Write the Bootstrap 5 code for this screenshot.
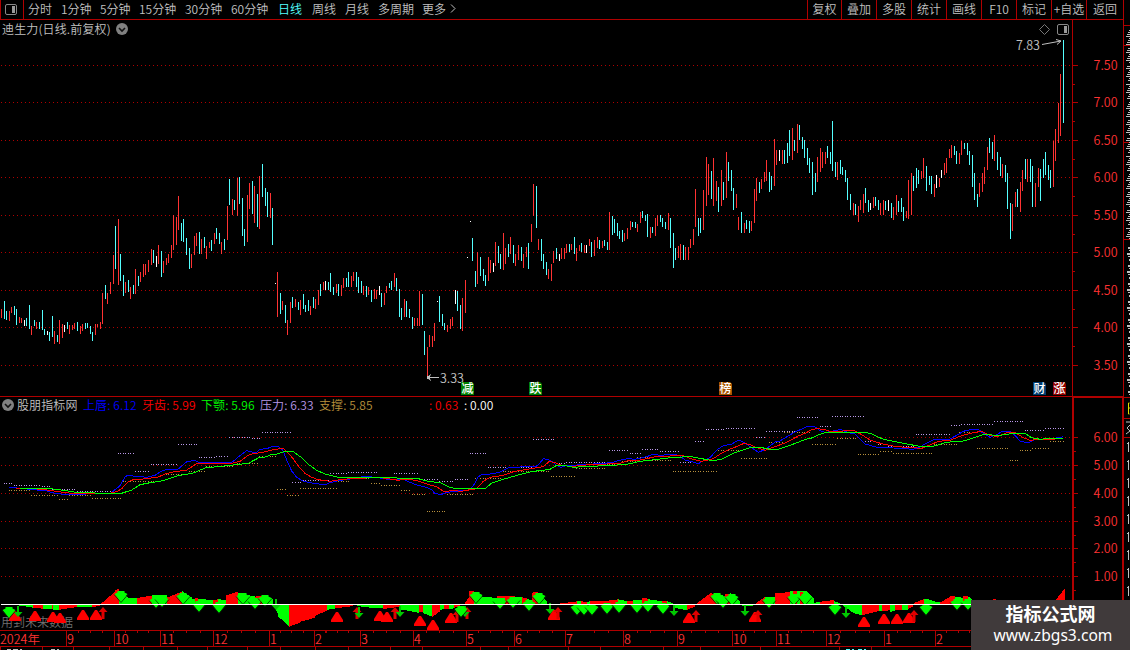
<!DOCTYPE html>
<html lang="zh-CN">
<head>
<meta charset="utf-8">
<title>迪生力 日线</title>
<link href="https://cdn.jsdelivr.net/npm/bootstrap@5.3.0/dist/css/bootstrap.min.css" rel="stylesheet">
<style>
:root{--ln:#b00000;--tx:#c0c0c0;--rd:#ff3232}
html,body{height:650px;overflow:hidden}
body{background:#000;color:var(--tx);font:12px/16px "Noto Sans CJK SC","Liberation Sans",sans-serif;font-weight:350}
.app{width:1130px;height:650px}
.desk{width:1124px;border-right:1px solid var(--ln)}
.toolbar{height:20px;border-bottom:1px solid var(--ln);line-height:18px}
.toolbar .ico{width:24px;border-right:1px solid var(--ln);border-left:1px solid var(--ln);height:19px}
.toolbar .tool{width:35px;border-left:1px solid var(--ln);height:19px}
.on{color:#54ffff}
.stack{display:grid}
.stack>*{grid-area:1/1}
.price{height:376px}.indi{height:234px}
.legend span{width:59px;flex:none}
.legend{letter-spacing:.1px}
.heading{padding:1px 0 0 2px;letter-spacing:.15px}
.axis{height:16px;border-top:1px solid var(--ln);border-bottom:1px solid var(--ln);color:var(--rd);height:17px}
.axis div{border-right:1px solid var(--ln);flex:none;line-height:16px;font-size:12.5px}
svg{display:block}
svg text{font-family:"Noto Sans CJK SC","Liberation Sans",sans-serif}
.strip{width:6px;overflow:hidden}
.wm{right:0;bottom:0;width:159px;height:50px;background:#403a3b;color:#fff}
.wm b{font-size:18px;line-height:20px;font-weight:700;margin-top:-3px}
.wm i{font:normal 15.6px/20px "Noto Sans","Open Sans",sans-serif;margin:2px 0 0 5px}
</style>
</head>
<body>
<div class="app d-flex position-relative overflow-hidden">
 <div class="desk d-flex flex-column flex-shrink-0 overflow-hidden">
  <nav class="toolbar d-flex flex-shrink-0">
   <div class="ico d-flex align-items-center justify-content-center flex-shrink-0"><svg width="12" height="11" style="margin-right:2px"><rect x=".5" y=".5" width="11" height="10" rx="1.5" fill="none" stroke="#888"/><rect x="7" y="2" width="3" height="7" fill="#999"/></svg></div>
   <div class="d-flex flex-grow-1" id="periods"></div>
   <div class="d-flex" id="tools"></div>
  </nav>
  <section class="price stack flex-shrink-0">
   <svg id="price" width="1123" height="376" viewBox="0 20 1123 376"></svg>
   <div class="d-flex align-items-start"><div class="heading d-flex align-items-center"><span>迪生力(日线.前复权)</span>
    <svg class="ms-1" width="14" height="14" viewBox="0 0 14 14"><circle cx="7" cy="7" r="6" fill="#808080"/><path d="M4 6l3 3 3-3" fill="none" stroke="#111" stroke-width="1.6"/></svg></div></div>
  </section>
  <section class="indi stack flex-shrink-0">
   <svg id="indi" width="1123" height="234" viewBox="0 396 1123 234"></svg>
   <div class="legend d-flex align-items-start" style="padding-top:1px"><svg width="17" height="16"><circle cx="8" cy="8" r="6" fill="#808080"/><path d="M5 7l3 3 3-3" fill="none" stroke="#111" stroke-width="1.6"/></svg><span style="width:66px">股朋指标网</span><span style="color:#00f">上唇: 6.12</span><span style="color:#f00">牙齿: 5.99</span><span style="color:#0f0">下颚: 5.96</span><span style="color:#b898e8">压力: 6.33</span><span style="color:#b8903c;width:110px">支撑: 5.85</span><span style="color:#f00;width:35px">: 0.63</span><span class="text-white">: 0.00</span></div>
  </section>
  <div class="axis d-flex flex-shrink-0" id="months"></div>
  <svg id="foot" width="1123" height="3" viewBox="0 647 1123 3"></svg>
 </div>
 <svg class="strip flex-shrink-0" id="strip" width="6" height="650" viewBox="1124 0 6 650"></svg>
 <div class="wm position-absolute d-flex flex-column align-items-center justify-content-center"><b>指标公式网</b><i>www.zbgs3.com</i></div>
</div>
<script src="https://cdn.jsdelivr.net/npm/bootstrap@5.3.0/dist/js/bootstrap.bundle.min.js"></script>
<script>
const $=id=>document.getElementById(id);
const R=(x,y,w,h,f)=>`<rect x="${x}" y="${y}" width="${w}" height="${h}" fill="${f}" shape-rendering="crispEdges"/>`;
$('periods').innerHTML=[['分时',33,4],['1分钟',39],['5分钟',39],['15分钟',46],['30分钟',46],['60分钟',47],['日线',34],['周线',33],['月线',33],['多周期',44],['更多',28]].map(([t,w,p],i)=>`<span class="text-nowrap ${i==6?'on':''}" style="width:${w+(p||0)}px;padding-left:${p||0}px">${t}</span>`).join('')+'<svg width="7" height="18"><path d="M1 4.500l4 4-4 4" fill="none" stroke="#c0c0c0"/></svg>';
$('tools').innerHTML=['复权','叠加','多股','统计','画线','F10','标记','+自选','返回'].map((t,i)=>`<div class="tool text-center text-nowrap" style="width:${i==0?34:i==8?37:35}px">${t}</div>`).join('');

// daily ranges: x, high, low, colour; every block is in thirds of a pixel from its own origin
const blocks=[
[0,150,`4,477,504r 13,453,507c 19,483,510c 28,483,513r 34,471,489r 43,468,495c 49,477,525c 58,501,519r 64,504,519r 73,510,528w 79,504,528c 88,465,537c 94,528,555r 103,510,528c 109,516,537r 118,516,537c 127,480,540c 133,537,555c 142,543,555w 148,546,573c 157,498,561c 163,543,582r 172,555,576c 178,510,582r 187,522,564r 193,525,546w 202,516,537c 208,525,552r 217,525,540r 223,519,537r 232,516,543c 241,528,552r 247,522,543r 256,519,537c 262,519,534c 271,528,552c 277,546,573c 286,522,555r 292,522,531r 301,516,537r 307,429,522r 316,405,447c 322,429,462r 331,396,432r 340,315,402r 346,228,357c 355,207,405r 361,312,393c 370,375,438c 376,396,429r 385,390,426c 391,411,447r 400,405,432c 406,357,432r 415,378,408c 421,366,396r 430,342,381r 436,342,375r 445,330,366r 454,297,345r 460,300,339c 469,318,351w 475,285,342r 484,303,381c 490,333,369r 499,324,345r 505,312,339r 514,285,324r 520,195,300r 529,201,285r 535,138,240r 544,219,273c 550,207,276c 559,264,315c 568,294,357c 574,312,354r 583,258,315r 589,249,288r 598,246,312c 604,267,312r 613,261,294c 619,288,327r 628,276,294r 634,270,303c 643,249,282r 649,234,267c 658,249,282c 664,276,312r 673,267,300c 682,168,270r 688,87,165c 697,147,195r 703,150,180c 712,84,198r 718,81,162c 727,144,258c 733,237,288c 742,135,276r 748,99,177r 757,93,192c 763,108,219r 772,132,231c 778,78,237r 787,42,141c 796,114,168c 802,126,201c 811,129,204r 817,174,285c 826,399,402w 832,366,501r 841,429,492c 847,453,480r 856,465,519c 862,510,555r`],
[270,170,`61,396,459r 67,381,414c 76,387,411r 85,396,420c 91,390,435r 100,372,417c 106,405,426c 115,390,423c 121,408,435r 130,381,414c 136,387,417r 145,360,405r 151,342,378c 160,336,360r 166,333,360w 175,336,360c 181,309,366c 190,351,375c 199,342,369r 205,342,378c 214,345,378r 220,324,354r 229,324,351c 235,306,351c 244,318,351r 250,306,333r 259,306,351c 265,321,369c 274,333,369c 280,348,375r 289,348,381c 295,351,375r 304,360,396c 313,357,387r 319,360,387r 328,348,375w 334,369,411c 343,369,405r 349,348,369r 358,339,354c 364,333,360c 373,309,351r 379,324,363c 388,357,441c 394,414,450c 403,387,441r 409,393,441c 418,417,444c 427,441,477c 433,444,468r 442,444,468r 448,363,468r 457,372,465c 463,483,555c 472,531,621r 478,495,531r 487,498,531r 493,459,513r 502,393,396w 508,378,456c 517,432,468c 523,459,480c 532,465,486r 541,447,477r 547,441,468r 556,360,402w 562,363,423c 571,405,477c 577,384,483r 586,330,429r 592,261,264w 601,153,156w 607,204,273c 616,303,351c 622,246,342r 631,261,318c 640,297,333c 646,315,348c 655,261,333r 661,270,309r 670,279,306w 676,216,288r 685,228,279c 691,252,297c 700,189,300r 706,234,282r 715,222,261c 721,201,252r 730,225,279c 736,252,288r 745,225,270r 754,231,273c 760,252,294r 769,231,261r 775,219,297c 784,162,216r 790,42,138r 799,48,174c 805,207,240r 814,207,273c`],
[540,110,`10,432,477c 19,456,495c 25,477,507r 34,462,513r 40,423,459r 49,414,447c 58,432,453w 64,414,447r 73,414,447r 79,402,429r 88,402,426c 94,402,420r 103,381,432c 109,414,453r 118,405,423r 124,399,426c 133,405,429r 139,405,429w 148,387,408r 154,396,441c 163,390,438r 172,381,414r 178,390,417c 187,393,414r 193,390,408c 202,396,420c 208,306,420r 217,318,375c 223,327,369c 232,339,378c 238,363,387c 247,360,396c 253,369,393r 262,354,387r 271,333,360r 277,336,351c 286,336,354c 292,342,366r 301,306,339r 307,303,324c 316,315,333c 322,312,381c 331,351,384r 337,351,369c 346,324,378r 352,315,348r 361,315,336c 367,324,351c 376,336,357c 385,309,360r 391,324,414c 400,369,474c 406,414,450c 415,408,444r 421,402,450r 430,405,450c 436,411,450r 445,411,450r 451,387,414r 460,357,405r 466,237,351r 475,324,378c 481,324,369c 490,240,360r 499,141,288r 505,162,255r 514,183,267c 520,144,288r 529,213,273r 535,231,306c 544,180,288r 550,216,270c 559,126,264r 565,156,213c 574,180,243c 580,234,300c 589,252,294r 595,321,360r 604,306,369c 613,339,369r 619,330,357c 628,333,369c 634,333,363r 643,237,339r 649,204,273r 658,216,249c 664,207,237r 673,186,216r 679,150,213r 688,186,246c 694,198,240c 703,87,228r 709,120,165r 718,120,153w 727,120,162r 733,120,162c 742,99,159c 748,60,138c 757,54,150r 763,90,123c 772,42,129r 778,45,90c 787,81,117c 793,90,144c 802,114,165c 808,144,189c`],
[810,30,`7,396,495c 16,429,486c 22,381,456r 31,354,426r 37,366,414r 46,366,402r 52,348,384c 61,366,402c 67,273,423c 76,396,441c 82,396,450r 91,390,432c 97,411,435c 106,420,456c 112,444,510c 121,492,540c 130,519,555r 136,522,555c 145,528,576r 151,510,540r 160,492,549r 166,474,519c 175,510,546c 181,519,540w 190,501,534r 196,501,528c 205,510,540c 211,519,555r 220,510,555r 226,513,540c 235,510,543w 244,519,564c 250,531,570r 259,495,555r 265,513,546c 274,504,546c 280,531,573c 289,543,564r 295,450,567r 304,429,555r 310,438,483c 319,414,474c 325,420,462c 334,423,447r 340,384,444r 349,408,483c 358,438,465c 364,438,492c 373,462,501r 379,435,474w 388,444,471r 394,420,444w 403,399,435r 409,384,429r 418,357,384r 424,345,384r 433,348,375c 439,363,402c 448,369,402r 454,333,375r 463,339,357c 472,339,375c 478,363,405c 487,375,471c 493,429,510c 502,492,531c 508,459,501r 517,429,486r 523,411,462r 532,351,420r 538,324,369c 547,336,387c 553,315,393r 562,366,420c 571,381,438c 577,402,444r 586,405,456c 592,429,537c 601,519,627c 607,522,603r 616,486,531r 622,477,531c 631,456,546r 637,420,483r 646,387,447c 652,387,456r 661,387,456c 667,408,531c 676,459,531r 685,414,471r 691,417,513c 700,387,444c 706,366,435c 715,405,450c 721,420,474c 730,333,471r 736,297,393r 745,219,339r 751,132,318r 760,30,279c`]];
const col={r:'#ff3232',c:'#54ffff',w:'#fff',g:'#0f0'};
const LN='#b00000';
const dots=y=>`<path d="M1 ${y}.5H1071" stroke="${LN}" stroke-dasharray="1 3" shape-rendering="crispEdges"/>`;
const num=(x,y,t,c='#ff3232',s=12.5)=>`<text x="${x}" y="${y}" font-size="${s}" fill="${c}">${t}</text>`;
let s='',xs=[];
[65,102,140,177,215,252,290,327,365].forEach((y,i)=>{s+=dots(y)+R(1072,y,6,1,LN)+num(1093.6,y+5,(7.5-i*.5).toFixed(2));if(i<8)s+=R(1072,y+19,3,1,LN)});
s+=R(1072,20,1,376,LN);
for(const [ox,oy,d] of blocks)for(const b of d.split(' ')){const c=b.slice(-1),[x,y,z]=b.slice(0,-1).split(',').map(Number);const px=ox+Math.floor(x/3);xs.push(px);s+=R(px,oy+Math.round(y/3),1,Math.round((z-y)/3),col[c])}
s+=num(1016,50,'7.83','#c0c0c0')+num(440,383,'3.33','#c0c0c0');
s+='<path d="M1042 44.500L1061 41M1056 39.500l5 1.500-4 3.500M427 377.500h12M427 377.500l4-3M427 377.500l4 3" stroke="#c0c0c0" fill="none"/>'+R(427,376,3,3,'#c0c0c0');
s+='<path d="M1044.500 24.500l5 5-5 5-5-5z" fill="none" stroke="#777"/><rect x="1057.500" y="24.500" width="11" height="10" rx="1.500" fill="none" stroke="#888"/>'+R(1064,26,3,7,'#999');
[[461,'减','#008000'],[529,'跌','#008000'],[719,'榜','#a85400'],[1033,'财','#003c70'],[1053,'涨','#900000']].forEach(([x,t,c])=>s+=`<path d="M${x} 382h11l2 2v11h-13z" fill="${c}"/><text x="${x+.5}" y="393" font-size="12" font-weight="500" fill="#fff">${t}</text>`);
$('price').innerHTML=s;

s='';
[437,465,493,521,548,576].forEach((y,i)=>{s+=dots(y)+R(1074,y,4,1,LN)+num(1093.6,y+5,(6-i).toFixed(2));s+=R(1074,y+14,2,1,LN)});
s+=R(0,396,1123,1,LN)+R(1072,396,52,2,LN)+R(1072,396,2,234,LN)+R(1122,396,2,234,LN);
const levels={'#b898e8':[[0,395,'12-36,265 42-120,271 126-150,274 155-225,283 229-336,289 354-402,175 406-447,229 454-532,208 534-592,148 597-645,187 648-684,184 687-750,127 756-780,130 786-873,112'],[270,395,'68-94,262 98-178,256 180-230,235 234-322,232 328-368,247 372-445,235 450-502,253 507-550,259 555-595,253 600-650,175 654-787,217 790-855,133'],[540,395,'48-74,205 78-204,202 208-264,166 270-302,175 306-354,163 360-418,169 421-463,202 466-492,139 498-552,103 558-645,100 648-676,127 678-766,109 771-834,67'],[810,370,'6-24,142 30-62,169 66-162,139 165-198,214 200-232,223 234-312,229 318-420,193 424-448,166 453-550,163 552-640,154 645-702,181 705-765,175']],
'#b8903c':[[0,395,'27-92,286 93-174,301 178-204,313 207-272,301 276-364,310 370-480,259 486-565,238 568-616,229 618-700,214 705-775,205 777-828,184 831-860,283'],[270,395,'50-88,301 90-202,280 206-237,259 240-298,250 304-328,265 333-388,271 393-420,286 426-466,298 470-526,349 530-610,298 615-694,250 698-838,229'],[540,395,'34-106,244 108-196,220 200-240,208 246-286,199 291-325,187 330-393,196 400-530,229 534-600,166 604-680,190 688-730,142 732-810,112'],[810,370,'6-78,223 82-138,205 144-206,253 210-246,244 248-366,250 370-440,223 447-495,187 501-594,235 600-624,271 630-664,241 668-716,235 720-762,214']]};
for(const c in levels)for(const [ox,oy,d] of levels[c])for(const g of d.split(' ')){const [r,y]=g.split(','),[a,b]=r.split('-').map(Number);for(const x of xs)if(x>=ox+Math.floor(a/3)&&x<=ox+b/3)s+=R(x,oy+Math.floor(y/3),1,1,c)}
const lines={'#0000ff':[[0,395,'27,278 40,278 60,280 110,285 140,288 155,293 175,296 190,298 330,296 345,284 360,272 375,246 385,240 400,243 440,247 465,241 485,228 500,223 535,222 560,200 585,196 600,204 650,202 690,203 700,199 715,186 740,167 755,171 770,172 780,163 800,161 820,154'],[270,395,'25,154 38,165 50,195 65,228 80,247 100,259 130,265 165,269 180,263 200,258 240,252 280,245 300,245 330,249 360,254 400,252 415,260 440,270 470,277 485,284 495,296 515,298 530,292 560,289 575,286 590,287 605,278 615,265 625,245 635,239 670,236 690,231 715,219 735,218 755,215 800,213 810,204 820,191 840,196'],[540,395,'38,200 48,211 62,217 75,213 110,210 160,207 200,204 215,203 245,194 265,191 285,193 320,185 340,178 360,181 385,179 405,178 420,183 435,195 460,201 475,206 495,194 510,188 530,165 550,152 575,147 597,135 612,142 630,155 655,172 670,166 690,153 705,141 720,138 745,123 770,108 790,101 800,94'],[810,370,'0,169 15,171 35,185 50,187 75,182 92,178 115,188 135,192 150,207 165,222 180,226 200,232 250,234 310,238 330,231 345,222 370,209 420,207 440,196 460,184 485,178 505,178 520,190 540,202 560,194 575,185 600,184 615,196 630,213 655,219 675,208 700,210 725,206 745,203 760,200']],
'#ff0000':[[0,395,'45,279 90,280 120,283 150,286 175,290 215,295 330,295 350,290 365,281 385,260 400,254 430,252 475,246 495,237 520,231 560,225 590,206 700,204 720,199 745,181 760,176 790,172'],[270,395,'10,164 40,160 55,174 70,192 85,213 105,235 125,247 145,254 180,259 210,254 250,250 330,248 355,251 385,256 410,252 440,257 480,270 500,275 520,289 555,287 575,289 590,286 620,281 640,259 660,247 700,241 730,230 770,223 810,217'],[540,395,'12,213 28,199 45,203 65,211 95,215 120,211 200,207 240,205 265,197 300,195 325,190 350,184 430,182 455,192 485,199 520,191 545,174 570,162 595,153 612,145 630,149 655,160 675,166 700,157 740,142 775,123 800,113'],[810,370,'0,181 20,176 40,178 60,184 100,183 130,181 150,191 180,210 215,221 260,230 335,235 360,225 385,214 420,211 450,199 480,190 515,184 540,197 565,199 590,188 615,187 640,203 660,211 690,208 720,209 760,204']],
'#00ff00':[[0,395,'60,281 150,281 200,287 235,293 330,295 365,295 395,285 420,269 450,263 490,257 530,243 580,234 615,219 680,212 745,205 775,189 800,185'],[270,395,'0,180 20,177 45,169 70,170 95,188 115,208 140,226 165,237 205,247 360,247 400,251 445,251 475,259 510,263 540,277 560,281 645,281 665,264 700,253 745,240 790,229'],[540,395,'0,227 30,223 50,211 75,212 100,217 130,215 220,211 265,207 300,199 345,194 400,187 455,185 485,191 520,197 545,192 580,175 630,158 660,157 690,163 715,163 750,151 800,132'],[810,370,'0,206 30,193 50,187 165,187 185,192 220,208 270,218 340,231 370,229 410,217 460,213 490,204 520,194 570,196 605,191 645,190 665,203 690,208 720,205 760,206']]};
for(const c in lines){const p=[];for(const [ox,oy,d] of lines[c])for(const q of d.split(' ')){const [x,y]=q.split(',');p.push((ox+x/3).toFixed(1)+','+(oy+y/3).toFixed(1))}s+=`<polyline points="${p.join(' ')}" fill="none" stroke="${c}" stroke-width="1" shape-rendering="crispEdges"/>`}
// momentum histogram: x1, height1, x2, height2 in thirds of a pixel
const hist=[[0,'45,0,100,-8,g 100,-9,130,-11,r 130,-11,155,-11,g 155,-13,160,-13,r 160,-14,177,-16,g 177,-14,232,-6,r 232,-5,275,-5,g 275,-6,300,-3,r 303,2,345,38,r 345,42,358,46,r 358,36,385,20,g 385,19,411,18,g 411,18,455,26,r 455,28,500,26,g 500,20,545,38,r 545,38,575,18,g 575,16,640,12,g 585,17,594,17,r 640,12,655,14,r 655,14,678,12,g 678,26,715,38,r 715,34,745,22,g 745,26,765,24,g 765,22,785,26,r 785,28,820,14,g 826,-10,835,-30,g 835,-35,867,-66,g 867,-65,900,-52,r 900,-50,945,-38,r 945,-32,980,-16,r 980,-14,1005,-12,g 1005,-10,1060,-3,r 1070,-3,1110,-8,g 1110,-8,1160,-10,g 1150,-12,1200,-5,r'],[400,'0,-13,57,-24,g 57,-22,70,-20,r 70,-25,95,-35,g 95,-35,120,-18,r 120,-14,132,-13,g 132,-13,147,-12,r 147,-13,162,-9,g 162,-8,180,-4,r 195,6,210,28,r 207,40,222,40,r 222,30,245,28,g 245,22,290,18,g 290,24,345,24,r 305,18,315,18,g 345,22,365,20,g 365,20,380,16,r 380,14,395,12,g 395,34,415,38,r 415,30,442,8,g 480,2,530,8,r 530,8,542,8,g 542,8,560,6,r 560,7,570,8,g 570,8,620,8,r 620,10,655,14,r 655,14,680,8,g 680,10,700,10,r 700,12,725,12,g 725,18,745,16,r 745,14,785,8,g 785,8,800,8,r 800,8,820,2,g 818,-8,862,-16,g 862,-14,885,-4,r 890,4,930,32,r 930,32,950,30,r 950,28,975,24,g 975,30,990,30,r 990,32,1020,6,g 1025,-2,1060,-4,g 1068,4,1095,22,r 1095,22,1125,20,g 1125,32,1170,36,r 1170,38,1220,38,g 1180,38,1190,38,r 1200,37,1210,37,r 1220,36,1242,16,g'],[810,'12,4,30,6,g 30,7,72,12,r 72,8,90,2,g 100,-3,130,-24,g 130,-24,156,-32,g 156,-30,207,-18,r 207,-18,217,-18,g 217,-18,240,-16,r 240,-20,256,-18,g 256,-16,277,-15,r 277,-16,293,-15,g 293,-12,310,-4,r 312,4,342,15,r 342,15,367,12,g 367,8,390,6,g 390,5,420,22,r 420,24,435,24,r 435,22,458,18,g 458,24,474,24,r 474,22,490,10,g 549,14,558,14,r 738,15,765,50,r']];
for(const [ox,d] of hist)for(const q of d.split(' ')){const [a,h,b,k,c]=q.split(',');const A=Math.round(ox+a/3),B=Math.round(ox+b/3);for(let x=A;x<B;x++){const v=Math.round((+h+(k-h)*(x-A)/Math.max(1,B-A))/3);s+=R(x,v>0?604-v:605,1,Math.abs(v),c=='r'?'#f00':'#0f0')}}
const D=(x,y)=>`<path d="M${x-6.5} ${y+2}l3-1.500v-1.500h7v1.500l3 1.500L${x} ${y+10}z" fill="#0f0"/><path d="M${x-7} ${y+2.5}L${x} ${y+10.5}l7-8" fill="none" stroke="#003000" stroke-width=".8"/>`;
const U=(x,y)=>`<path d="M${x-6} ${y+10}v-2L${x-1} ${y}h2L${x+6} ${y+8}v2z" fill="#f00"/>`;
const d=(x,y)=>`<path d="M${x-1} ${y}h2v6h3.500L${x} ${y+11}l-4.500-5h3.500z" fill="#00c800"/>`;
const u=(x,y)=>`<path d="M${x} ${y}l4.500 5h-3v7h-3v-7h-3z" fill="#e00000"/>`;
s+=num(1,626.5,'用到未来数据','#707070',12);
[[0,'45,92 105,93 158,95 180,98 249,90 288,90 1011,95 1140,93 1161,95',U],[400,'60,107 99,120 152,100 462,90 866,98 1065,95',U],[810,'162,112 222,102 261,102 296,100',U],
[0,'310,82 1070,80 1185,82',u],[400,'170,90 200,80 475,82 888,90 1075,90',u],[810,'312,90',u],
[0,'53,78 1077,80 827,57',d],[400,'0,78 450,68 822,76 1036,76 196,78',d],[810,'109,80',d],
[0,'28,84 362,35 468,54 485,50 550,42 598,66 658,68 728,42 764,56 796,48',D],[400,'182,80 227,40 300,56 340,54 386,64 416,42 530,74 553,76 575,74 622,73 658,68 712,68 744,66 788,72 950,42 970,54 995,45 1108,55 1182,45 1215,45',D],[810,'76,74 349,74 440,60 474,60',D]].forEach(([ox,l,f])=>l.split(' ').forEach(q=>{const [x,y]=q.split(',');s+=f(Math.round(ox+x/3),Math.round(580+y/3))}));
s+=R(1,604,1063,1,'#fff');
$('indi').innerHTML=s;

const mx=[0,66,114,160,213,269,314,360,413,466,514,565,623,677,732,776,826,884,935,980];
$('months').innerHTML=['2024年',9,10,11,12,1,2,3,4,5,6,7,8,9,10,11,12,1,2].map((m,i)=>{const w=mx[i+1]-mx[i]+(i==0?1:0);return `<div style="width:${w}px;background:repeating-linear-gradient(90deg,transparent 0 ${w/4-1}px,var(--ln) ${w/4-1}px ${w/4}px) 0 0/${i?w-3:0}px 2px no-repeat">${m}</div>`}).join('');
s='';for(const x of [0,42,73,109,143,177,207,247,280,315,348,390,422,480,508,568,600,663,700,760,839,871])s+=R(x,647,1,3,LN);
[[7,'#c0c0c0'],[14,'#c0c0c0'],[51,'#c0c0c0'],[846,'#54ffff'],[858,'#54ffff']].forEach(([x,c])=>s+=R(x,649,4,1,c)+R(x+6,649,2,1,c));
$('foot').innerHTML=s;

s=R(1124,25,6,1,LN)+R(1124,45,6,1,LN)+R(1124,142,6,1,LN)+R(1124,239,6,1,LN)+R(1124,397,6,1,LN)+R(1124,418,6,1,LN)+R(1124,437,6,1,LN);
for(let y=28,i=0;y<240;y+=2,i++)if(i%9)s+=R(1126+(i*7%4),y,4-(i*7%4),1,'#c0c0c0');
for(let y=244,i=0;y<395;y+=3,i++)if(i%6)s+=R(1127+(i%3),y,3,1+(i%2),'#c0c0c0');
s+='<path d="M1129.500 403h-1v11h1M1128 408h2" stroke="#e0e000" fill="none"/><path d="M1126 422h4M1130 425l-3 3 3 3-4 3" stroke="#c0c0c0" fill="none"/>';
for(let y=442;y<600;y+=18)s+=R(1128,y,1,10,'#c0c0c0')+R(1127,y+1,1,1,'#c0c0c0');
$('strip').innerHTML=s;
</script>
</body>
</html>
